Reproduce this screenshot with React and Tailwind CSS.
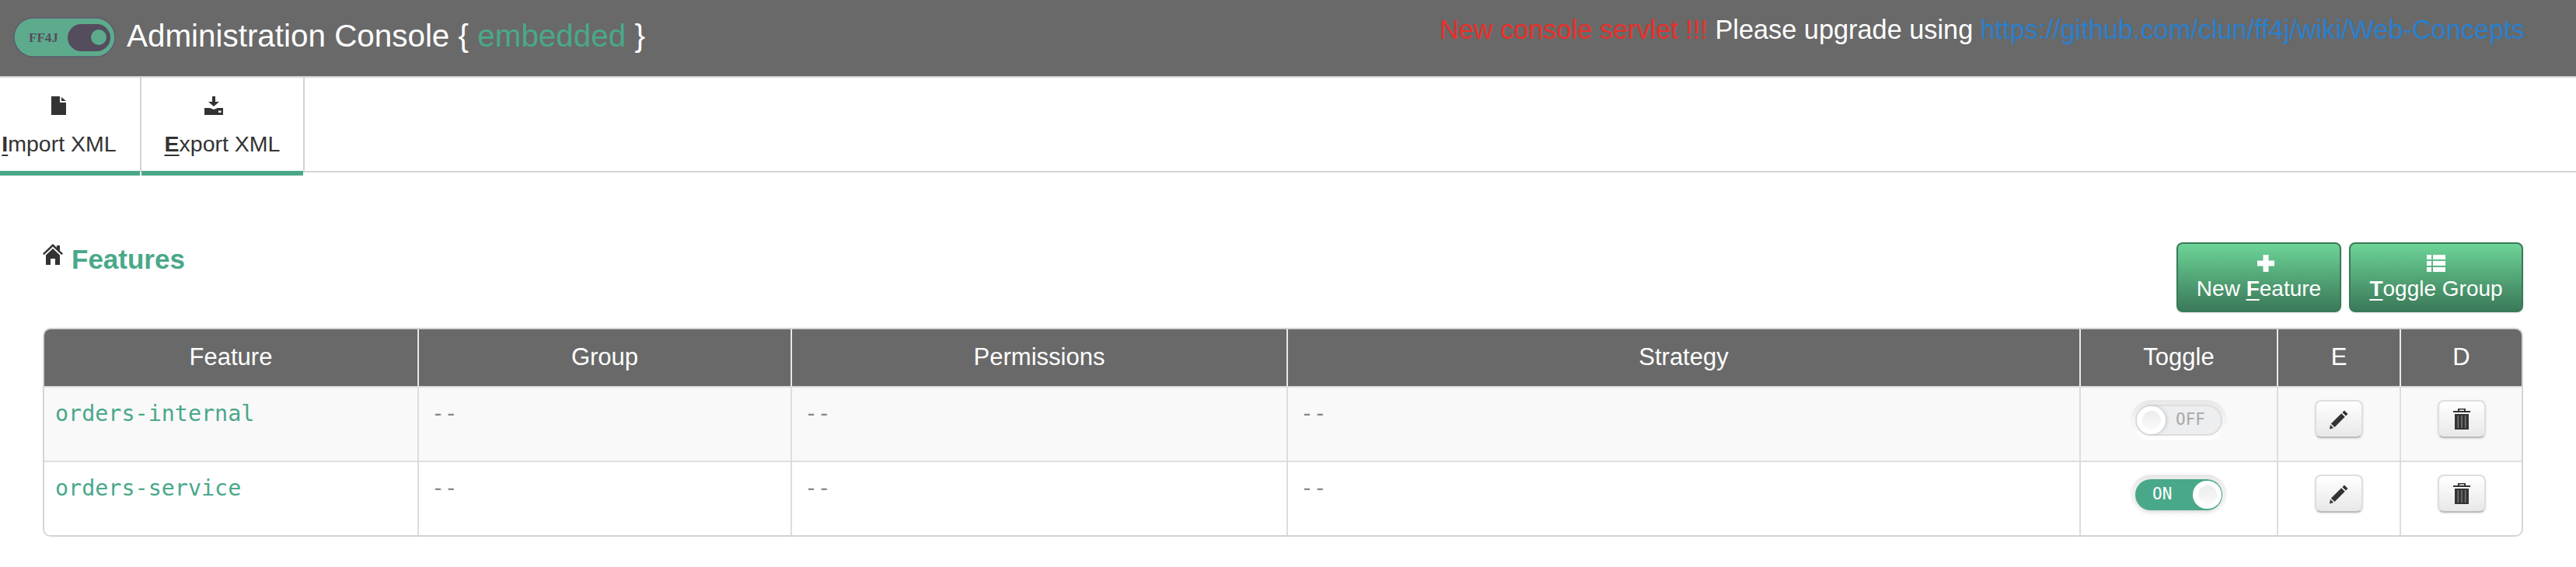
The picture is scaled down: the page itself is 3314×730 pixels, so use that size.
const GREEN = "text-[#4aa88a]";

function Logo() {
  return (
    <svg width="132" height="52" viewBox="0 0 132 52" className="shrink-0">
      <rect x="1" y="1" width="130" height="50" rx="25" fill="#5dab8c" stroke="#5f5a72" strokeWidth="1.5" />
      <rect x="70" y="9" width="55" height="35" rx="17.5" fill="#554c5e" />
      <circle cx="110" cy="26" r="10" fill="#5dab8c" />
      <text x="20" y="32" fontFamily="'Liberation Serif', serif" fontWeight="700" fontSize="17" fill="#554c5e">FF4J</text>
    </svg>
  );
}

function FileIcon() {
  return (
    <svg width="20" height="24" viewBox="0 0 20 24" fill="#333">
      <path d="M0 0h11v8h8v16H0z" />
      <path d="M13 1l6 5h-6z" />
    </svg>
  );
}

function DownloadIcon() {
  return (
    <svg width="24" height="24" viewBox="0 0 24 24" fill="#333">
      <path d="M10 0h4v7h5l-7 6-7-6h5z" />
      <path d="M0 15h7l5 2 5-2h7v9H0z" />
      <rect x="18" y="18.5" width="3.5" height="2.5" fill="#fff" />
    </svg>
  );
}

function HomeIcon() {
  return (
    <svg width="26" height="27" viewBox="0 0 26 27" fill="#333">
      <path d="M13 0l13 12.5-1.6 1.8L13 3.6 1.6 14.3 0 12.5z" />
      <path d="M18 2h4v7l-4-3.6z" />
      <path d="M13 6l9 8.4V27h-6v-8h-6v8H4V14.4z" />
    </svg>
  );
}

function PlusIcon() {
  return (
    <svg width="22" height="22" viewBox="0 0 22 22" fill="#fff">
      <path d="M7.5 0h7v7.5H22v7h-7.5V22h-7v-7.5H0v-7h7.5z" />
    </svg>
  );
}

function ListIcon() {
  return (
    <svg width="24" height="22" viewBox="0 0 24 22" fill="#fff">
      <rect x="0" y="0" width="6" height="6" />
      <rect x="8" y="0" width="16" height="6" />
      <rect x="0" y="8" width="6" height="6" />
      <rect x="8" y="8" width="16" height="6" />
      <rect x="0" y="16" width="6" height="6" />
      <rect x="8" y="16" width="16" height="6" />
    </svg>
  );
}

function PencilIcon() {
  return (
    <svg width="26" height="26" viewBox="0 0 26 26" fill="#333">
      <path d="M20 1.5l4.5 4.5-2.6 2.6-4.5-4.5z" />
      <path d="M16.2 5.3l4.5 4.5L7.5 23 2.8 18.5z" />
      <path d="M2 20l4 4-5 1.5z" />
    </svg>
  );
}

function TrashIcon() {
  return (
    <svg width="22" height="27" viewBox="0 0 22 27" fill="#333">
      <path d="M6 0h10v3h6v2H0V3h6zM8 1.6V3h6V1.6z" fillRule="evenodd" />
      <path d="M2 7h18v20H2z" />
      <rect x="5.5" y="9" width="1.6" height="16" fill="#777" />
      <rect x="10.2" y="9" width="1.6" height="16" fill="#777" />
      <rect x="14.9" y="9" width="1.6" height="16" fill="#777" />
    </svg>
  );
}

function Tab({ letter, rest, icon, width, inner, iconShift }) {
  return (
    <a className={`flex flex-col h-[126px] ${width}`}>
      <div className={`h-[120px] border-r-2 border-[#d4d4d4] flex flex-col items-center ${inner}`}>
        <div className={`h-[24px] mt-[24px] flex ${iconShift}`}>{icon}</div>
        <div className="mt-[17px] text-[28.5px] leading-[40px] text-[#333] whitespace-nowrap">
          <b className="underline underline-offset-[4px] font-bold">{letter}</b>{rest}
        </div>
      </div>
      <div className="h-[6px] mr-[2px] bg-[#4aa88a]" />
    </a>
  );
}

function GreenButton({ icon, before, letter, rest, width, iconShift }) {
  return (
    <button className={`${width} h-[90px] rounded-[8px] border-2 border-[#3a7a58] bg-gradient-to-b from-[#6dd497] to-[#3b7a59] shadow-sm flex flex-col items-center text-white text-[28px] leading-[40px]`}>
      <div className={`h-[22px] mt-[14px] flex ${iconShift}`}>{icon}</div>
      <div className="mt-[2px] whitespace-nowrap">
        {before}<b className="underline underline-offset-[4px] font-bold">{letter}</b>{rest}
      </div>
    </button>
  );
}

function Toggle({ on }) {
  return (
    <div className="w-[124px] h-[52px] rounded-full p-[6px] mx-auto bg-gradient-to-b from-[#e8e8e8] to-[#ffffff]">
      {on ? (
        <div className="relative h-[40px] w-[112px] rounded-full bg-[#4aa88a] shadow-md flex items-center pl-[22px]">
          <span className="font-['DejaVu_Sans_Mono',monospace] text-[21px] text-white font-medium">ON</span>
          <div className="absolute right-[1px] top-[2px] w-[37px] h-[36px] rounded-full bg-white flex items-center justify-center">
            <div className="w-[24px] h-[24px] rounded-full bg-gradient-to-b from-[#ececec] to-[#fafafa]" />
          </div>
        </div>
      ) : (
        <div className="relative h-[40px] w-[112px] rounded-full bg-[#edeef0] border-2 border-[#dddddd] flex items-center justify-end pr-[20px]">
          <span className="font-['DejaVu_Sans_Mono',monospace] text-[21px] text-[#a8a8a8]">OFF</span>
          <div className="absolute left-[0px] top-[0px] w-[37px] h-[36px] rounded-full bg-white shadow-[2px_0_4px_rgba(0,0,0,0.15)] flex items-center justify-center">
            <div className="w-[24px] h-[24px] rounded-full bg-gradient-to-b from-[#ececec] to-[#fafafa]" />
          </div>
        </div>
      )}
    </div>
  );
}

function IconButton({ children }) {
  return (
    <button className="w-[62px] h-[49px] mx-auto rounded-[8px] border-2 border-[#dedede] border-b-[#bcbcbc] bg-gradient-to-b from-[#ffffff] to-[#e8e8e8] shadow-sm flex items-center justify-center">
      {children}
    </button>
  );
}

const headers = [
  ["Feature", "w-[480px]"],
  ["Group", "w-[480px]"],
  ["Permissions", "w-[638px]"],
  ["Strategy", "w-[1020px]"],
  ["Toggle", "w-[254px]"],
  ["E", "w-[158px]"],
  ["D", "w-[157px]"],
];

const rows = [
  { name: "orders-internal", on: false, bg: "bg-[#f9f9f9]" },
  { name: "orders-service", on: true, bg: "bg-white" },
];

const cell = "border-l-2 border-[#dddddd] align-top";
const dash = "text-[#888] font-['DejaVu_Sans_Mono',monospace] text-[28px] leading-[40px] pt-[14px] pl-[16px]";

export default function App() {
  return (
    <div className="font-['Liberation_Sans',Arial,sans-serif] bg-white min-h-[730px]">
      <header className="h-[100px] bg-[#696969] border-b-2 border-[#d4d4d4] flex items-start justify-between pr-[66px]">
        <div className="flex items-center pl-[17px] pt-[22px]">
          <Logo />
          <span className="ml-[14px] text-[40.4px] leading-[48px] text-white whitespace-nowrap -mt-[4px]">
            Administration Console {"{ "}
            <span className={GREEN}>embedded</span>
            {" }"}
          </span>
        </div>
        <div className="pt-[18px] text-[34.3px] leading-[40px] whitespace-nowrap">
          <span className="text-[#e8302a]">New console servlet !!! </span>
          <span className="text-white">Please upgrade using </span>
          <a className="text-[#2a7fcc]">https://github.com/clun/ff4j/wiki/Web-Concepts</a>
        </div>
      </header>

      <nav className="flex h-[122px] border-b-2 border-[#d4d4d4]">
        <Tab letter="I" rest="mport XML" icon={<FileIcon />} width="w-[182px]" inner="pr-[28px]" iconShift="" />
        <Tab letter="E" rest="xport XML" icon={<DownloadIcon />} width="w-[210px]" inner="" iconShift="mr-[22px]" />
      </nav>

      <main className="pl-[55px] pr-[68px]">
        <div className="h-[200px] flex justify-between items-start">
          <div className="flex items-start pt-[92px]">
            <HomeIcon />
            <h2 className={`ml-[11px] -mt-[2px] text-[35px] leading-[44px] font-bold ${GREEN}`}>Features</h2>
          </div>
          <div className="flex gap-[10px] pt-[90px]">
            <GreenButton icon={<PlusIcon />} before="New " letter="F" rest="eature" width="w-[212px]" iconShift="ml-[18px]" />
            <GreenButton icon={<ListIcon />} before="" letter="T" rest="oggle Group" width="w-[224px]" iconShift="" />
          </div>
        </div>

        <div className="rounded-[10px] border-2 border-[#d4d4d4] overflow-hidden">
          <table className="w-full table-fixed border-separate border-spacing-0">
            <thead>
              <tr className="bg-[#696969] text-white text-[31px] font-normal">
                {headers.map(([h, w], i) => (
                  <th key={h} className={`${w} h-[73px] font-normal ${i > 0 ? "border-l-2 border-[#e8e8e8]" : ""}`}>{h}</th>
                ))}
              </tr>
            </thead>
            <tbody>
              {rows.map((r) => (
                <tr key={r.name} className={r.bg}>
                  <td className={`h-[96px] border-t-2 border-[#dddddd] align-top pt-[14px] pl-[14px] text-[28.4px] leading-[40px] font-['DejaVu_Sans_Mono',monospace] ${GREEN}`}>{r.name}</td>
                  <td className={`${cell} border-t-2 ${dash}`}>--</td>
                  <td className={`${cell} border-t-2 ${dash}`}>--</td>
                  <td className={`${cell} border-t-2 ${dash}`}>--</td>
                  <td className={`${cell} border-t-2 pt-[16px]`}><Toggle on={r.on} /></td>
                  <td className={`${cell} border-t-2 pt-[16px]`}><IconButton><PencilIcon /></IconButton></td>
                  <td className={`${cell} border-t-2 pt-[16px]`}><IconButton><TrashIcon /></IconButton></td>
                </tr>
              ))}
            </tbody>
          </table>
        </div>
      </main>
    </div>
  );
}
